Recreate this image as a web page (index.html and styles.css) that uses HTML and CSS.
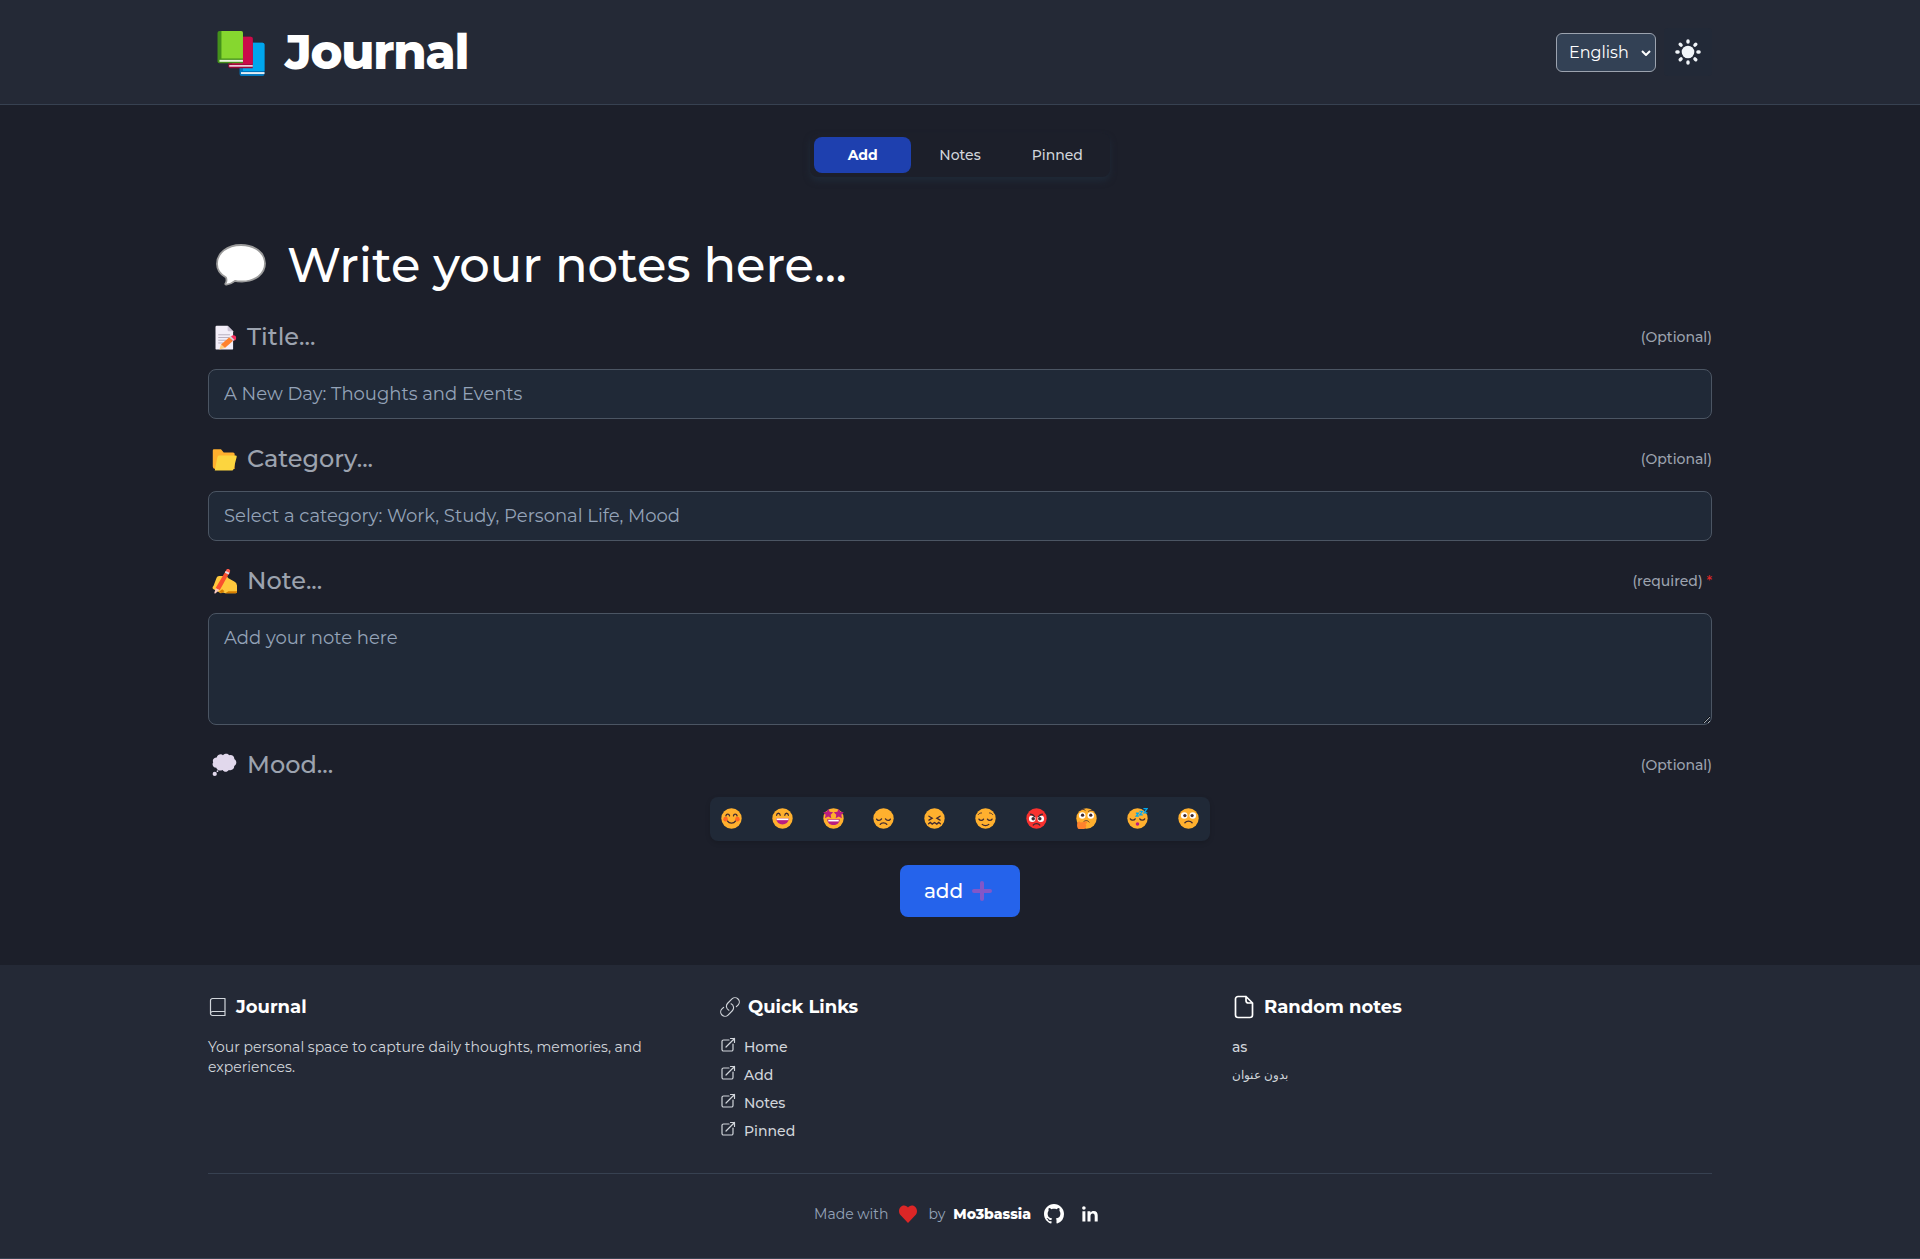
FILE: index.html
```html
<!DOCTYPE html>
<html lang="en">
<head>
<meta charset="utf-8">
<title>Journal</title>
<link rel="stylesheet" href="styles.css">
</head>
<body>
<header class="header">
  <div class="container header-row">
    <div class="brand">
      <svg class="books" viewBox="0 0 48 46">
        <path d="M24 12h22a2 2 0 0 1 2 2v30a2 2 0 0 1-2 2H24.500a2 2 0 0 1-2-2V14z" fill="#0074BA"/><path d="M26 12h20a2 2 0 0 1 2 2v27H26z" fill="#00A6ED"/><path d="M24 42h24v2H24z" fill="#E3EDF5"/>
        <path d="M13 6h21a2 2 0 0 1 2 2v30H13a2.200 2.200 0 0 1-2-2z" fill="#990838"/><path d="M15 6h19a2 2 0 0 1 2 2v26H15z" fill="#CA0B4A"/><path d="M12 34.800h24v1.700H12z" fill="#F3D5E2"/>
        <path d="M2 0h22a2 2 0 0 1 2 2v31H2a2 2 0 0 1-2-2V2a2 2 0 0 1 2-2z" fill="#44911B"/><path d="M4 0h20a2 2 0 0 1 2 2v26H4z" fill="#86D72F"/><path d="M2 29.500h24v2H2z" fill="#E9F5DE"/>
      </svg>
      <h1 class="brand-name">Journal</h1>
    </div>
    <div class="tools">
      <div class="language"><span>English</span><svg viewBox="0 0 10 6"><path d="M1 1l4 4 4-4" fill="none" stroke="#fff" stroke-width="2"/></svg></div>
      <button class="theme" aria-label="Theme">
        <svg viewBox="0 0 26 26" fill="#f1f5f9"><circle cx="13" cy="13" r="6.300"/>
          <g stroke="#f1f5f9" stroke-width="3.400" stroke-linecap="round"><path d="M13 1.900v1.200M13 22.900v1.200M1.900 13h1.200M22.900 13h1.200M5.200 5.200l.9.9M19.900 19.900l.9.9M5.200 20.800l.9-.9M19.900 6.100l.9-.9"/></g></svg>
      </button>
    </div>
  </div>
</header>

<main class="container main">
  <nav class="tabs">
    <a class="tab tab-active">Add</a><a class="tab">Notes</a><a class="tab">Pinned</a>
  </nav>

  <h2 class="page-title">
    <svg class="bubble" viewBox="0 0 50 42"><path d="M25 1C39 1 49 9 49 19.500S39 37.500 26 37.500c-3 0-5 0-7-.6-2.500 2-5.500 3.500-8.500 3.800-1.300.1-1.500-.8-.8-1.700.9-1.300.8-4 .3-5.500C4.500 30.500 1 26 1 20 1 9 11 1 25 1z" fill="#fff" stroke="#9b9b9b" stroke-width="1.800"/></svg>
    <span>Write your notes here...</span>
  </h2>

  <section class="field">
    <div class="field-head">
      <label class="label"><svg class="label-icon" viewBox="0 0 32 32">
        <path d="M6 1h14l7 7v22a1.500 1.500 0 0 1-1.500 1.500H6A1.500 1.500 0 0 1 4.500 30V2.500A1.500 1.500 0 0 1 6 1z" fill="#F3EEF8"/><path d="M20 1l7 7h-5.500A1.500 1.500 0 0 1 20 6.500z" fill="#CDC4D6"/><path d="M8 12.500h15M8 16h14M8 19.500h10M8 23h6" stroke="#B4ACBC" stroke-width="1.200"/><path d="M22.500 15.500l4.500 4.500-10.500 9.500-5-4.500z" fill="#FF822D"/><path d="M11.500 25l5 4.500-7 2z" fill="#FFCE7C"/><circle cx="27.500" cy="16.500" r="3.400" fill="#F92F60"/><path d="M22 15.700l1.700-1.500 5 4.800-1.700 1.600z" fill="#D3D3D3"/></svg>Title...</label>
      <span class="hint">(Optional)</span>
    </div>
    <input class="input" type="text" placeholder="A New Day: Thoughts and Events">
  </section>

  <section class="field">
    <div class="field-head">
      <label class="label"><svg class="label-icon" viewBox="0 0 32 32">
        <path d="M2.500 3h9l3.500 4h12A2 2 0 0 1 29 9v19H4a3 3 0 0 1-3-3V4.500A1.500 1.500 0 0 1 2.500 3z" fill="#FFB02E"/><path d="M8.500 11H30a1.500 1.500 0 0 1 1.500 2l-4 15.500a2 2 0 0 1-2 1.500H3.500L7 12.500z" fill="#FCD53F"/></svg>Category...</label>
      <span class="hint">(Optional)</span>
    </div>
    <input class="input" type="text" placeholder="Select a category: Work, Study, Personal Life, Mood">
  </section>

  <section class="field">
    <div class="field-head">
      <label class="label"><svg class="label-icon" viewBox="0 0 32 32">
        <path d="M9 9h8.500a3 3 0 0 1 3 2.500l8 4.500a6 6 0 0 1 3.500 5V29a2 2 0 0 1-2 2H17l-3-1-3 1-3-2-6-3c-2-1-1.500-3 0-4.500L5.500 12C6.500 10 7.500 9 9 9z" fill="#FFC83D"/><path d="M17 31l4-2.500h11V29a2 2 0 0 1-2 2zM9 29l4-3 3 2.500-4 2.500z" fill="#D67D00"/><path d="M17.500 2.500l5 2L10 27l-5.500-2.500z" fill="#F9502E"/><path d="M18.300 1.200a2 2 0 0 1 4.500 2.600l-1 1.800-4.600-2.300z" fill="#FF5A4B"/><path d="M17.600 2.600l4.900 2.300-1.200 2.200-4.900-2.400z" fill="#E2D9E4"/><path d="M4.800 24.500l4.500 2.300-5 4.400c-1 .3-1.500-.3-1.200-1.200z" fill="#F9C9C0"/></svg>Note...</label>
      <span class="hint">(required) <span class="star">*</span></span>
    </div>
    <textarea class="input textarea" placeholder="Add your note here"></textarea>
  </section>

  <section class="field">
    <div class="field-head">
      <label class="label"><svg class="label-icon thought" viewBox="0 0 32 32" fill="#E1D8EC">
        <path d="M6 7c1-4 6-5 8-3 3-3 7-2 8 0 4-1 7 2 6.500 5 3.500 2 3.500 7 0 9 0 4-3 6-7 5-2 3-6 3-8 0-4 2-7 0-8-3-4 0-6-4-4-7-1.500-3 1-6 4.500-6z"/><circle cx="3.500" cy="28" r="2.700"/><circle cx="7" cy="24.500" r="1.100"/></svg>Mood...</label>
      <span class="hint">(Optional)</span>
    </div>
    <div class="moods">
      <svg class="face" viewBox="0 0 32 32"><circle class="skin" cx="16" cy="16" r="15.500"/><g fill="#FF6723"><circle cx="7" cy="17" r="3.500"/><circle cx="25" cy="17" r="3.500"/></g><path class="ln" d="M7.500 12c.5-3.500 5-3.500 5.500 0M19 12c.5-3.500 5-3.500 5.500 0M10 20c2.500 4 9.500 4 12 0"/></svg>
      <svg class="face" viewBox="0 0 32 32"><circle class="skin" cx="16" cy="16" r="15.500"/><path class="ln" d="M7 11c.5-4 5-4 5.500 0M19.500 11c.5-4 5-4 5.500 0"/><path d="M6.500 16h19c0 12-19 12-19 0z" fill="#BB1D80"/><path d="M7 16h18v2.500H7z" fill="#fff"/></svg>
      <svg class="face" viewBox="0 0 32 32"><circle class="skin" cx="16" cy="16" r="15.500"/><g fill="#BB1D80"><path d="M8 1l2.300 4.800 5.200.8-3.800 3.700.9 5.200L8 13l-5 2.500 1-5.200L.3 6.600l5.300-.8zM24 1l2.300 4.800 5.400.8-3.800 3.700.9 5.200L24 13l-4.700 2.500.9-5.200-3.800-3.700 5.300-.8z"/><path d="M6.500 17h19c0 12-19 12-19 0z"/></g><path d="M8 18h16v2.500H8z" fill="#fff"/></svg>
      <svg class="face" viewBox="0 0 32 32"><circle class="skin" cx="16" cy="16" r="15.500"/><path class="ln" d="M5.500 17c1.500 2.500 5.500 2.500 7.500-.5M19 16.500c2 3 6 3 7.500.5M11 25c2-3 8-3 10 0"/></svg>
      <svg class="face" viewBox="0 0 32 32"><circle class="skin" cx="16" cy="16" r="15.500"/><path class="ln" d="M7.500 12.500l5 3-5 3M24.500 12.500l-5 3 5 3M7 24l2.500-2 3 2.500 3.500-2.500 3.500 2.500 3-2.500 2.500 2"/></svg>
      <svg class="face" viewBox="0 0 32 32"><circle class="skin" cx="16" cy="16" r="15.500"/><path class="ln" d="M6 17c1.500 2.500 5.500 2.500 7 0M19 17c1.500 2.500 5.500 2.500 7 0M11 25c2.500 2.500 7.500 2.500 10 0"/><path class="thin" d="M5 10c1-1.500 3-2.500 5-2.500M27 10c-1-1.500-3-2.500-5-2.500"/></svg>
      <svg class="face" viewBox="0 0 32 32"><circle cx="16" cy="16" r="15.500" fill="#F8312F"/><g fill="#fff"><circle cx="9.500" cy="16.500" r="5"/><circle cx="22.500" cy="16.500" r="5"/></g><g fill="#402A32"><circle cx="11" cy="16.500" r="2.700"/><circle cx="21" cy="16.500" r="2.700"/></g><path class="ln" d="M7 9.500c2 .3 4.500 1.500 6 3.500M25 9.500c-2 .3-4.500 1.500-6 3.500M11 26c2-3 8-3 10 0"/></svg>
      <svg class="face" viewBox="0 0 32 32"><circle class="skin" cx="16" cy="16" r="15.500"/><g fill="#fff"><circle cx="9.500" cy="11.500" r="5"/><circle cx="22.500" cy="11.500" r="5"/></g><g fill="#402A32"><circle cx="10" cy="11" r="2.500"/><circle cx="22.500" cy="11" r="2.500"/></g><path class="thin" d="M7 3.500c2-2 5-2 7 0M19 5c2-1.500 5-2 7-1M12 20.500c3-2 6-2 8 1"/><path d="M2 23c1-3 4-3 5-1l8-1.500c2 0 2 2 1 3l-2 1c3 1 2 7-3 8H5c-3-1-4-5-3-9.500z" fill="#FF822D"/></svg>
      <svg class="face" viewBox="0 0 32 32"><circle class="skin" cx="16" cy="16" r="15.500"/><path class="ln" d="M5 16.500c1.500 2.500 6 2.500 7.500 0M19.500 16.500c1.500 2.500 6 2.500 7.500 0"/><circle cx="16" cy="24.500" r="2.700" fill="#BB1D80"/><path d="M13.500 8h4l-3.500 4.500h4M19 5h4.500l-4 5.500H24M25 1h5.500L26 7.500h5" fill="none" stroke="#00A6ED" stroke-width="2"/></svg>
      <svg class="face" viewBox="0 0 32 32"><circle class="skin" cx="16" cy="16" r="15.500"/><g fill="#fff"><circle cx="9.500" cy="11.500" r="5"/><circle cx="22.500" cy="11.500" r="5"/></g><g fill="#402A32"><circle cx="10.500" cy="11.500" r="2.500"/><circle cx="21.500" cy="11.500" r="2.500"/></g><path class="ln" d="M10.500 22.500c3-3.500 8-3.500 11 0"/></svg>
    </div>
  </section>

  <button class="submit">add <svg viewBox="0 0 20 20"><path d="M10 2v16M2 10h16" stroke="#8257c8" stroke-width="4" stroke-linecap="round"/></svg></button>
</main>

<footer class="footer">
  <div class="container">
    <div class="columns">
      <div>
        <h3 class="col-title"><svg class="book" viewBox="0 0 20 20"><path d="M4.500 1.500H17v17H4.500a2 2 0 0 1-2-2v-13a2 2 0 0 1 2-2zM2.500 16.500a2 2 0 0 1 2-2H17"/></svg>Journal</h3>
        <p class="about">Your personal space to capture daily thoughts, memories, and experiences.</p>
      </div>
      <div>
        <h3 class="col-title"><svg class="chain" viewBox="1.500 1.500 21 21"><path d="M13.190 8.688a4.500 4.500 0 0 1 1.242 7.244l-4.500 4.500a4.500 4.500 0 0 1-6.364-6.364l1.757-1.757m13.350-.622 1.757-1.757a4.500 4.500 0 0 0-6.364-6.364l-4.500 4.500a4.500 4.500 0 0 0 1.242 7.244"/></svg>Quick Links</h3>
        <ul class="links">
          <li><svg viewBox="0 0 16 16"><path d="M9 3H3.500A1.500 1.500 0 0 0 2 4.500v8A1.500 1.500 0 0 0 3.500 14h8a1.500 1.500 0 0 0 1.500-1.500V7M6 10l8.500-8.500M10.500 1.500h4v4"/></svg>Home</li>
          <li><svg viewBox="0 0 16 16"><path d="M9 3H3.500A1.500 1.500 0 0 0 2 4.500v8A1.500 1.500 0 0 0 3.500 14h8a1.500 1.500 0 0 0 1.500-1.500V7M6 10l8.500-8.500M10.500 1.500h4v4"/></svg>Add</li>
          <li><svg viewBox="0 0 16 16"><path d="M9 3H3.500A1.500 1.500 0 0 0 2 4.500v8A1.500 1.500 0 0 0 3.500 14h8a1.500 1.500 0 0 0 1.500-1.500V7M6 10l8.500-8.500M10.500 1.500h4v4"/></svg>Notes</li>
          <li><svg viewBox="0 0 16 16"><path d="M9 3H3.500A1.500 1.500 0 0 0 2 4.500v8A1.500 1.500 0 0 0 3.500 14h8a1.500 1.500 0 0 0 1.500-1.500V7M6 10l8.500-8.500M10.500 1.500h4v4"/></svg>Pinned</li>
        </ul>
      </div>
      <div>
        <h3 class="col-title"><svg class="page" viewBox="0 0 24 24"><path d="M14 1.500H6A2.500 2.500 0 0 0 3.500 4v16A2.500 2.500 0 0 0 6 22.500h12a2.500 2.500 0 0 0 2.500-2.500V8L14 1.500v4A2.500 2.500 0 0 0 16.500 8h4"/></svg>Random notes</h3>
        <ul class="links">
          <li>as</li>
          <li><span class="arabic" lang="ar" dir="rtl">بدون عنوان</span></li>
        </ul>
      </div>
    </div>
    <div class="credits">
      <span>Made with</span>
      <svg class="heart" viewBox="0 0 18 18"><path d="M9 18L1 9.500C-1.500 5.500 1 .5 5 .5c2 0 3.300 1 4 2 .7-1 2-2 4-2 4 0 6.500 5 4 9z" fill="#dc2626"/></svg>
      <span class="by">by</span>
      <strong class="author">Mo3bassia</strong>
      <svg class="github" viewBox="0 0 16 16"><path fill="#fff" d="M8 0C3.580 0 0 3.580 0 8c0 3.540 2.290 6.530 5.470 7.590.4.070.55-.17.55-.38 0-.19-.01-.82-.01-1.490-2.010.37-2.530-.49-2.690-.94-.09-.23-.48-.94-.82-1.130-.28-.15-.68-.52-.01-.53.63-.01 1.080.58 1.230.82.72 1.210 1.870.87 2.330.66.070-.52.28-.87.51-1.070-1.780-.2-3.640-.89-3.640-3.950 0-.87.31-1.590.82-2.150-.08-.2-.36-1.020.08-2.120 0 0 .67-.21 2.200.82.64-.18 1.320-.27 2-.27s1.360.09 2 .27c1.530-1.040 2.200-.82 2.200-.82.44 1.100.16 1.920.08 2.120.51.56.82 1.270.82 2.150 0 3.070-1.870 3.750-3.650 3.950.29.25.54.73.54 1.480 0 1.070-.01 1.930-.01 2.200 0 .21.15.46.55.38A8.010 8.010 0 0 0 16 8c0-4.420-3.580-8-8-8z"/></svg>
      <svg class="linkedin" viewBox="0 0 16 16" fill="#fff"><circle cx="1.900" cy="2" r="1.800"/><path d="M.4 5.200h3V15.500h-3zM5.500 5.200h2.900v1.400c.7-1.100 1.800-1.700 3.200-1.700 3 0 4.100 1.700 4.100 4.700v5.900h-3v-5.400c0-1.500-.5-2.500-1.900-2.500-1.600 0-2.300 1.100-2.300 2.600v5.300h-3z"/></svg>
    </div>
  </div>
</footer>
</body>
</html>
```
FILE: styles.css
```css
* { box-sizing: border-box; margin: 0; padding: 0; }
body {
  background: #1c1f2a;
  color: #fff;
  font: 500 14px/20px Montserrat, Inter, sans-serif;
}
button, input, textarea { font: inherit; border: 0; }
svg { display: block; flex: none; }
.container { width: 1504px; margin: 0 auto; }

.header { height: 105px; background: #242936; border-bottom: 1px solid #374151; }
.header-row { height: 104px; display: flex; align-items: center; justify-content: space-between; }
.brand { display: flex; align-items: center; gap: 20px; padding-left: 9px; }
.books { width: 48px; height: 45px; margin-top: 3px; }
.brand-name { font-size: 48px; line-height: 48px; font-weight: 800; letter-spacing: -1.2px; }
.tools { display: flex; align-items: center; gap: 8px; }
.language {
  width: 100px; height: 39px; padding: 1px 4px 0 12px;
  display: flex; align-items: center; justify-content: space-between;
  background: #334155; border: 1px solid #9ca3af; border-radius: 6px;
  font-size: 16px; line-height: 22px; font-weight: 400;
}
.language svg { width: 10px; height: 6px; }
.theme { width: 48px; height: 48px; display: grid; place-items: center; background: #222937; border-radius: 4px; }
.theme svg { width: 26px; height: 26px; }

.main { display: flex; flex-direction: column; padding: 28px 0 48px; }
.tabs {
  align-self: center; width: 300px; height: 44px; padding: 4px;
  display: grid; grid-template-columns: repeat(3, 1fr);
  border-radius: 8px; background: #1c1f2a;
  box-shadow: 0 4px 6px #1f2937;
  margin-bottom: 64px;
}
.tab { display: grid; place-items: center; color: #d1d5db; border-radius: 8px; }
.tab-active { background: #1e40af; color: #fff; font-weight: 700; }

.page-title {
  display: flex; align-items: center; gap: 21px; padding-left: 8px;
  font-size: 48px; line-height: 48px; font-weight: 500; margin-bottom: 32px;
}
.bubble { width: 50px; height: 42px; }

.field { margin-bottom: 24px; }
.field-head { display: flex; align-items: center; justify-content: space-between; height: 32px; margin-bottom: 16px; }
.label { display: flex; align-items: center; gap: 10px; padding-left: 4px; font-size: 24px; line-height: 32px; color: #9ca3af; }
.label-icon { width: 25px; height: 25px; }
.thought { margin-top: -2px; }
.hint { color: #9ca3af; }
.star { color: #dc2626; }
.input {
  display: block; width: 100%; height: 50px; padding: 0 15px;
  background: #202937; border: 1px solid #4b5563; border-radius: 8px;
  font-size: 18px; font-weight: 400; line-height: 28px; color: #fff;
}
.input::placeholder { color: #94a3b8; }
.textarea { height: 112px; padding-top: 10px; resize: vertical; }

.moods {
  width: 500px; height: 44px; margin: 0 auto; padding: 0 11px 1px;
  display: flex; align-items: center; justify-content: space-between;
  background: #202937; border-radius: 8px; box-shadow: 0 2px 5px rgba(0, 0, 0, .15);
}
.face { width: 21px; height: 21px; }
.skin { fill: #ffb02e; }
.ln, .thin { fill: none; stroke: #402a32; stroke-width: 2; stroke-linecap: round; }
.thin { stroke-width: 1.3; }

.submit {
  align-self: center; width: 120px; height: 52px;
  display: flex; align-items: center; justify-content: center; gap: 9px; padding-right: 4px;
  background: #2563eb; color: #fff; border-radius: 8px; font-size: 20px;
}
.submit svg { width: 20px; height: 20px; }

.footer { background: #242936; height: 294px; padding-top: 32px; border-bottom: 1px solid #374151; }
.columns { display: grid; grid-template-columns: repeat(3, 480px); gap: 32px; height: 176px; }
.columns svg { fill: none; stroke: #d1d5db; stroke-width: 1.2; stroke-linejoin: round; stroke-linecap: round; }
.col-title { display: flex; align-items: center; gap: 8px; height: 20px; margin-bottom: 20px; font-size: 18px; font-weight: 700; }
.book { width: 20px; height: 20px; }
.chain { width: 20px; height: 20px; }
.columns .page { width: 24px; height: 24px; stroke: #fff; stroke-width: 1.7; }
.about { color: #d1d5db; font-weight: 400; }
.links { list-style: none; display: grid; gap: 8px; color: #d1d5db; }
.links li { display: flex; align-items: center; gap: 8px; height: 20px; }
.links svg { width: 16px; height: 16px; margin-top: -5px; }
.arabic { font-size: 11.5px; }

.credits { display: flex; align-items: center; justify-content: center; height: 82px; padding-bottom: 1px; border-top: 1px solid #374151; color: #94a3b8; font-weight: 400; }
.heart { width: 18px; height: 18px; margin: 0 11px; }
.by { margin-right: 8px; }
.author { color: #fff; font-weight: 800; }
.github { width: 20px; height: 20px; margin-left: 13px; }
.linkedin { width: 16px; height: 16px; margin: 0 8px 0 18px; }
```
